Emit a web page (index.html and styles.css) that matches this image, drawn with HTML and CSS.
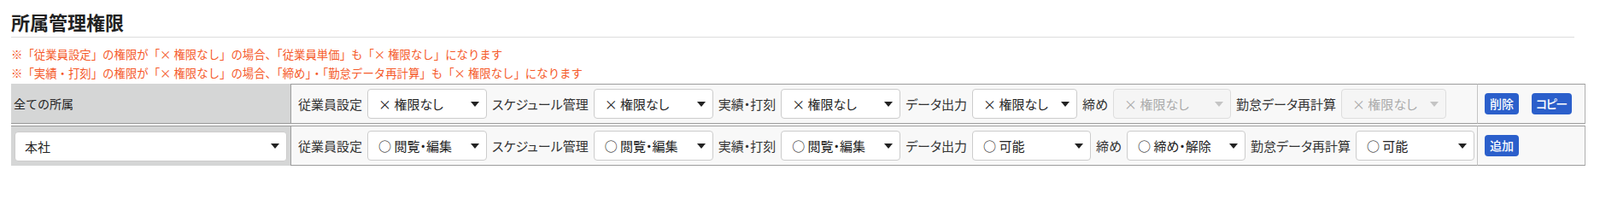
FILE: index.html
```html
<!DOCTYPE html>
<html lang="ja">
<head>
<meta charset="utf-8">
<title>所属管理権限</title>
<link rel="stylesheet" href="styles.css">
</head>
<body>
<div class="page">
  <h2 class="title">所属管理権限</h2>
  <div class="notes">
    <p>※「従業員設定」の権限が「× 権限なし」の場合、「従業員単価」も「× 権限なし」になります</p>
    <p>※「実績・打刻」の権限が「× 権限なし」の場合、「締め」・「勤怠データ再計算」も「× 権限なし」になります</p>
  </div>
  <div class="perm">
    <div class="prow">
      <div class="dept head">全ての所属</div>
      <div class="fields">
        <span class="lbl">従業員設定</span>
        <div class="sel w140"><span>× 権限なし</span><svg class="arr" viewBox="0 0 10 6"><polygon points="0,0 10,0 5,6"/></svg></div>
        <span class="lbl">スケジュール管理</span>
        <div class="sel w140"><span>× 権限なし</span><svg class="arr" viewBox="0 0 10 6"><polygon points="0,0 10,0 5,6"/></svg></div>
        <span class="lbl">実績・打刻</span>
        <div class="sel w140"><span>× 権限なし</span><svg class="arr" viewBox="0 0 10 6"><polygon points="0,0 10,0 5,6"/></svg></div>
        <span class="lbl">データ出力</span>
        <div class="sel w123"><span>× 権限なし</span><svg class="arr" viewBox="0 0 10 6"><polygon points="0,0 10,0 5,6"/></svg></div>
        <span class="lbl">締め</span>
        <div class="sel w138 disabled"><span>× 権限なし</span><svg class="arr" viewBox="0 0 10 6"><polygon points="0,0 10,0 5,6"/></svg></div>
        <span class="lbl">勤怠データ再計算</span>
        <div class="sel w123 disabled"><span>× 権限なし</span><svg class="arr" viewBox="0 0 10 6"><polygon points="0,0 10,0 5,6"/></svg></div>
      </div>
      <div class="actions">
        <button class="btn">削除</button>
        <button class="btn btn-kana">コピー</button>
      </div>
    </div>
    <div class="prow">
      <div class="dept">
        <div class="sel wdept"><span>本社</span><svg class="arr" viewBox="0 0 10 6"><polygon points="0,0 10,0 5,6"/></svg></div>
      </div>
      <div class="fields">
        <span class="lbl">従業員設定</span>
        <div class="sel w140"><span>○ 閲覧・編集</span><svg class="arr" viewBox="0 0 10 6"><polygon points="0,0 10,0 5,6"/></svg></div>
        <span class="lbl">スケジュール管理</span>
        <div class="sel w140"><span>○ 閲覧・編集</span><svg class="arr" viewBox="0 0 10 6"><polygon points="0,0 10,0 5,6"/></svg></div>
        <span class="lbl">実績・打刻</span>
        <div class="sel w140"><span>○ 閲覧・編集</span><svg class="arr" viewBox="0 0 10 6"><polygon points="0,0 10,0 5,6"/></svg></div>
        <span class="lbl">データ出力</span>
        <div class="sel w139"><span>○ 可能</span><svg class="arr" viewBox="0 0 10 6"><polygon points="0,0 10,0 5,6"/></svg></div>
        <span class="lbl">締め</span>
        <div class="sel w139"><span>○ 締め・解除</span><svg class="arr" viewBox="0 0 10 6"><polygon points="0,0 10,0 5,6"/></svg></div>
        <span class="lbl">勤怠データ再計算</span>
        <div class="sel w139"><span>○ 可能</span><svg class="arr" viewBox="0 0 10 6"><polygon points="0,0 10,0 5,6"/></svg></div>
      </div>
      <div class="actions">
        <button class="btn">追加</button>
      </div>
    </div>
  </div>
</div>
</body>
</html>
```

FILE: styles.css
```css
* { box-sizing: border-box; }

html, body {
  margin: 0;
  padding: 0;
  background: #ffffff;
}

body {
  font-family: "Noto Sans CJK JP", "Noto Sans", sans-serif;
  color: #333333;
}

.page {
  padding: 0 30px 0 13px;
}

.title {
  margin: 10px 0 0;
  padding: 0 0 3px;
  font-size: 22px;
  line-height: 30px;
  font-weight: 700;
  color: #222222;
  border-bottom: 1px solid #dddddd;
}

.notes {
  margin-top: 8px;
  color: #f55a2a;
  font-size: 13.4px;
  line-height: 22px;
}

.notes p {
  margin: 0;
}

.perm {
  margin-top: 2px;
  width: 1843px;
  display: flex;
  flex-direction: column;
  gap: 2px;
}

.prow {
  display: grid;
  grid-template-columns: 327px 1389px 127px;
  height: 47px;
}

.dept {
  background: #d5d6d6;
  display: flex;
  align-items: center;
  padding: 0 4px;
}

.prow:first-child .dept {
  border-bottom: 1px solid #999999;
}

.prow + .prow .dept {
  border-top: 1px solid #999999;
}

.dept.head {
  padding-left: 3px;
  font-size: 14px;
  color: #222222;
}

.fields {
  background: #f8f8f8;
  border: 1px solid #9c9c9c;
  border-right: none;
  display: flex;
  align-items: center;
  gap: 6px;
  padding: 0 8px;
  font-feature-settings: "palt";
}

.actions {
  background: #f8f8f8;
  border: 1px solid #9c9c9c;
  border-left: 1px solid #c4c4c4;
  border-right: 1px solid #b0b0b0;
  display: flex;
  align-items: center;
  gap: 15px;
  padding: 0 8px;
}

.lbl {
  font-size: 15px;
  color: #333333;
  white-space: nowrap;
}

.sel {
  height: 35px;
  background: #ffffff;
  border: 1px solid #cccccc;
  border-radius: 4px;
  display: flex;
  align-items: center;
  justify-content: space-between;
  padding: 0 8px 0 12px;
  font-size: 15px;
  color: #222222;
  white-space: nowrap;
  flex: none;
}

.sel .arr {
  width: 10px;
  height: 6px;
  fill: #222222;
}

.sel.disabled {
  background: #f5f5f5;
  border-color: #dddddd;
  color: #aaaaaa;
}

.sel.disabled .arr {
  fill: #c4c4c4;
}

.w140 { width: 140px; }
.w139 { width: 139px; }
.w138 { width: 138px; }
.w123 { width: 123px; }
.wdept { width: 319px; padding-left: 11px; }

.btn {
  height: 25px;
  padding: 0 6px;
  border: none;
  border-radius: 4px;
  background: #2b5fcb;
  color: #ffffff;
  font-family: "Noto Sans CJK JP", sans-serif;
  font-size: 14px;
  font-weight: 500;
  font-feature-settings: "palt";
  line-height: 25px;
  cursor: pointer;
}

.btn-kana {
  letter-spacing: -1.5px;
  padding: 0 6px 0 5px;
}
```
